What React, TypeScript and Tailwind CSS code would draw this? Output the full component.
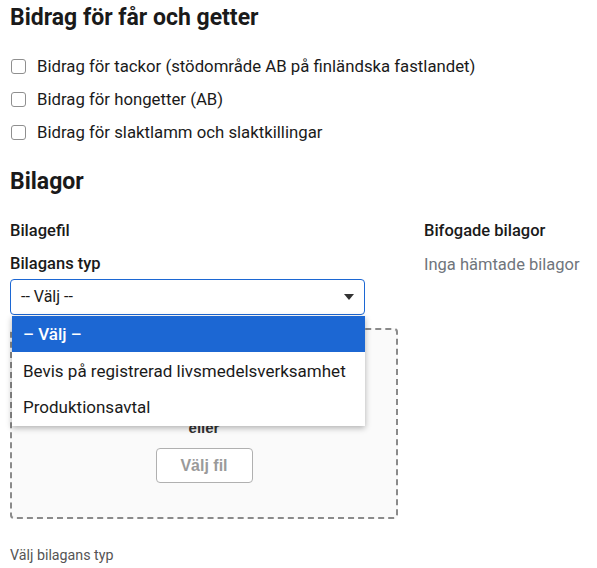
import React from "react";

const checkboxes = [
  "Bidrag för tackor (stödområde AB på finländska fastlandet)",
  "Bidrag för hongetter (AB)",
  "Bidrag för slaktlamm och slaktkillingar",
];

const options = ["– Välj –", "Bevis på registrerad livsmedelsverksamhet", "Produktionsavtal"];

const App: React.FC = () => {
  return (
    <div className="min-h-[568px] bg-white pl-[10px] text-[#1a1a1a] font-['Roboto',sans-serif]">
      <h1 className="mt-[5px] text-[23px] leading-[26px] font-bold">Bidrag för får och getter</h1>

      <div className="mt-[19px] flex flex-col">
        {checkboxes.map((label) => (
          <label key={label} className="flex h-[33px] items-center gap-[11px] text-[16.75px]">
            <span className="ml-px h-[15px] w-[15px] rounded-[3px] border border-[#8f8f8f] bg-white" />
            <span>{label}</span>
          </label>
        ))}
      </div>

      <h2 className="mt-[20px] text-[23px] leading-[26px] font-bold">Bilagor</h2>

      <div className="mt-[26px] flex gap-[26px]">
        <div className="flex w-[388px] flex-col">
          <div className="text-[16.5px] leading-[20px] font-medium">Bilagefil</div>
          <div className="mt-[13px] text-[16.5px] leading-[20px] font-medium">Bilagans typ</div>

          <div className="relative mt-[5px] w-[355px]">
            <div className="flex h-[36px] items-center justify-between rounded-[4px] border border-[#1c67d3] bg-white pl-[10px] pr-[10px] text-[16px]">
              <span>-- Välj --</span>
              <svg width="10" height="6" viewBox="0 0 10 6">
                <path d="M0 0h10L5 6z" fill="#333" />
              </svg>
            </div>
            <ul className="absolute left-[2px] top-[37px] z-10 w-[353px] bg-white pb-[2px] text-[17px] shadow-[0_2px_6px_rgba(0,0,0,0.3)]">
              {options.map((opt, i) => (
                <li
                  key={opt}
                  className={
                    i === 0
                      ? "flex h-[36px] items-center bg-[#1c67d3] pl-[11px] pt-px font-medium text-white"
                      : "flex h-[36px] items-center pl-[11px] pt-[3px]"
                  }
                >
                  {opt}
                </li>
              ))}
            </ul>
          </div>

          <div className="mt-[13px] flex h-[191px] flex-col items-center rounded-[4px] border-2 border-dashed border-[#8a8a8a] bg-[#fafafa] pt-[89px] font-['Liberation_Sans',Arial,sans-serif]">
            <div className="text-[15px] leading-[18px] font-bold text-[#333]">eller</div>
            <button className="mt-[11px] h-[35px] w-[97px] rounded-[4px] border border-[#b0b0b0] bg-white text-[16px] font-bold text-[#9a9a9a]">
              Välj fil
            </button>
          </div>

          <div className="mt-[28px] text-[14.25px] leading-[16px] text-[#555]">Välj bilagans typ</div>
        </div>

        <div className="flex flex-col">
          <div className="text-[16.5px] leading-[20px] font-medium">Bifogade bilagor</div>
          <div className="mt-[14px] text-[16.5px] leading-[20px] text-[#6f757c]">Inga hämtade bilagor</div>
        </div>
      </div>
    </div>
  );
};

export default App;
